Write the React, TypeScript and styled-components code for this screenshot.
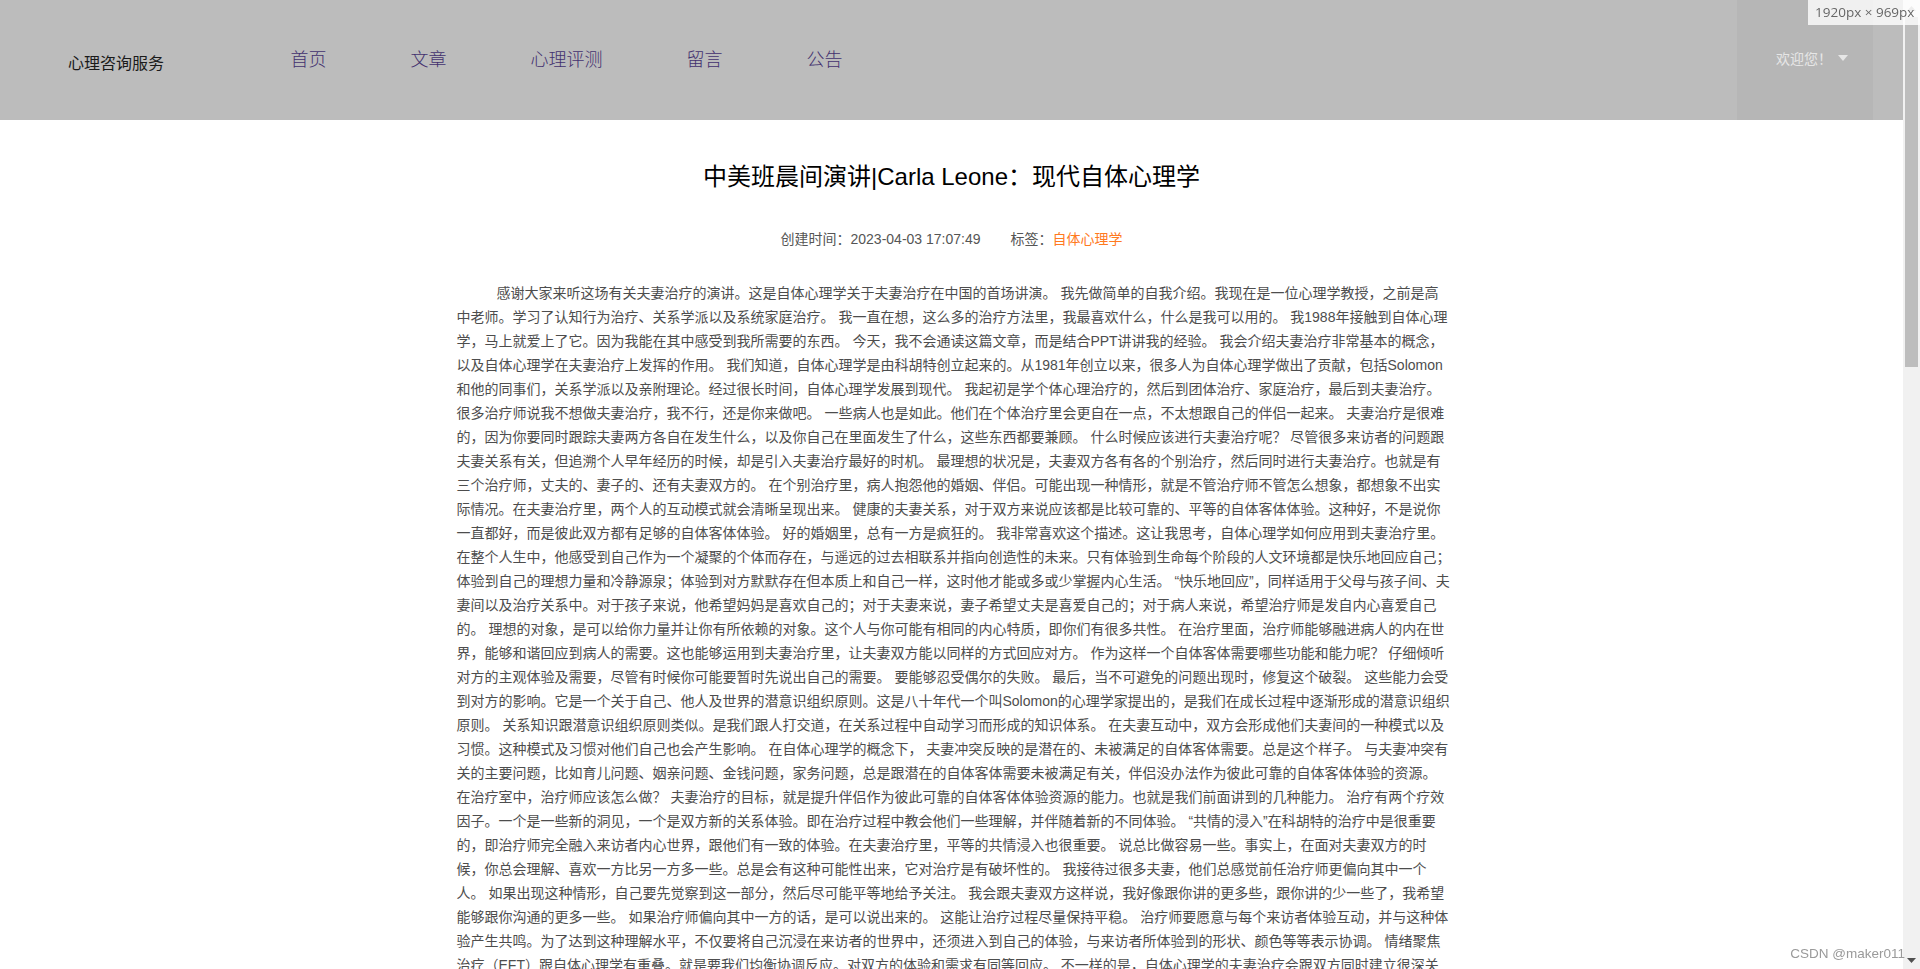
import styled, { createGlobalStyle } from "styled-components";

const GlobalStyle = createGlobalStyle`
    html, body {
        margin: 0;
        padding: 0;
        height: 100%;
        overflow: hidden;
        background: #fff;
    }
    body {
        font-family: "Liberation Sans", "Noto Sans CJK SC", sans-serif;
    }
`

const Page = styled.div`
    display: flex;
    height: 100vh;
    overflow: hidden;
`

const Viewport = styled.div`
    flex: 1;
    min-width: 0;
    overflow: hidden;
`

const Header = styled.header`
    display: flex;
    align-items: stretch;
    height: 120px;
    background: #bcbcbc;
    padding: 0 30px 0 68px;
`

const Logo = styled.div`
    width: 180.6px;
    padding-top: 4px;
    font-size: 16px;
    color: #1a1a1a;
    display: flex;
    align-items: center;
`

const Nav = styled.nav`
    display: flex;
    align-items: center;
    padding-bottom: 4px;
`

const NavLink = styled.a`
    padding: 0 42px;
    font-size: 18px;
    font-weight: 300;
    color: #43316f;
    cursor: pointer;
`

const UserBox = styled.div`
    margin-left: auto;
    width: 136px;
    box-sizing: border-box;
    padding: 0 0 4px 39px;
    display: flex;
    align-items: center;
    gap: 6px;
    background: #b6b6b6;
    color: #e6e6e6;
    font-size: 14px;
`

const Caret = styled.span`
    width: 0;
    height: 0;
    border-left: 5.5px solid transparent;
    border-right: 5.5px solid transparent;
    border-top: 6px solid #e6e6e6;
`

const Title = styled.h1`
    margin: 40px 0 0;
    text-align: center;
    font-size: 24px;
    line-height: 34px;
    font-weight: 400;
    color: #000;
`

const Meta = styled.div`
    margin-top: 35px;
    display: flex;
    justify-content: center;
    gap: 30px;
    font-size: 14px;
    line-height: 20px;
    color: #555;
`

const Tag = styled.span`
    color: #ff7a1f;
`

const Article = styled.article`
    width: 990px;
    margin: 32px auto 0;
    font-size: 14px;
    line-height: 24px;
    color: #4d4d4d;
`

const Line = styled.span`
    display: block;
    white-space: nowrap;
    &:first-child {
        text-indent: 40px;
    }
`

const ScrollRail = styled.div`
    width: 17px;
    flex: none;
    display: flex;
    flex-direction: column;
    align-items: center;
    background: #f1f1f1;
`

const RailButton = styled.div`
    width: 17px;
    height: 17px;
    flex: none;
    display: flex;
    align-items: center;
    justify-content: center;
`

const RailThumb = styled.div`
    width: 13px;
    height: 350px;
    flex: none;
    background: #bdbdbd;
`

const RailGap = styled.div`
    flex: 1;
`

const SizeBadge = styled.div`
    position: fixed;
    top: 0;
    right: 0;
    width: 112px;
    height: 25px;
    box-sizing: border-box;
    padding-left: 7px;
    background: rgba(255, 255, 255, 0.8);
    color: #666;
    font-family: "Open Sans", sans-serif;
    font-size: 13.5px;
    line-height: 25px;
    white-space: nowrap;
`

const Watermark = styled.div`
    position: fixed;
    right: 15px;
    bottom: 7px;
    color: #9a9a9a;
    font-size: 13.5px;
    line-height: 16px;
    white-space: nowrap;
`

const navItems = ["首页", "文章", "心理评测", "留言", "公告"]

const lines = [
    "感谢大家来听这场有关夫妻治疗的演讲。这是自体心理学关于夫妻治疗在中国的首场讲演。 我先做简单的自我介绍。我现在是一位心理学教授，之前是高",
    "中老师。学习了认知行为治疗、关系学派以及系统家庭治疗。 我一直在想，这么多的治疗方法里，我最喜欢什么，什么是我可以用的。 我1988年接触到自体心理",
    "学，马上就爱上了它。因为我能在其中感受到我所需要的东西。 今天，我不会通读这篇文章，而是结合PPT讲讲我的经验。 我会介绍夫妻治疗非常基本的概念，",
    "以及自体心理学在夫妻治疗上发挥的作用。 我们知道，自体心理学是由科胡特创立起来的。从1981年创立以来，很多人为自体心理学做出了贡献，包括Solomon",
    "和他的同事们，关系学派以及亲附理论。经过很长时间，自体心理学发展到现代。 我起初是学个体心理治疗的，然后到团体治疗、家庭治疗，最后到夫妻治疗。",
    "很多治疗师说我不想做夫妻治疗，我不行，还是你来做吧。 一些病人也是如此。他们在个体治疗里会更自在一点，不太想跟自己的伴侣一起来。 夫妻治疗是很难",
    "的，因为你要同时跟踪夫妻两方各自在发生什么，以及你自己在里面发生了什么，这些东西都要兼顾。 什么时候应该进行夫妻治疗呢？ 尽管很多来访者的问题跟",
    "夫妻关系有关，但追溯个人早年经历的时候，却是引入夫妻治疗最好的时机。 最理想的状况是，夫妻双方各有各的个别治疗，然后同时进行夫妻治疗。也就是有",
    "三个治疗师，丈夫的、妻子的、还有夫妻双方的。 在个别治疗里，病人抱怨他的婚姻、伴侣。可能出现一种情形，就是不管治疗师不管怎么想象，都想象不出实",
    "际情况。在夫妻治疗里，两个人的互动模式就会清晰呈现出来。 健康的夫妻关系，对于双方来说应该都是比较可靠的、平等的自体客体体验。这种好，不是说你",
    "一直都好，而是彼此双方都有足够的自体客体体验。 好的婚姻里，总有一方是疯狂的。 我非常喜欢这个描述。这让我思考，自体心理学如何应用到夫妻治疗里。",
    "在整个人生中，他感受到自己作为一个凝聚的个体而存在，与遥远的过去相联系并指向创造性的未来。只有体验到生命每个阶段的人文环境都是快乐地回应自己；",
    "体验到自己的理想力量和冷静源泉；体验到对方默默存在但本质上和自己一样，这时他才能或多或少掌握内心生活。 “快乐地回应”，同样适用于父母与孩子间、夫",
    "妻间以及治疗关系中。对于孩子来说，他希望妈妈是喜欢自己的；对于夫妻来说，妻子希望丈夫是喜爱自己的；对于病人来说，希望治疗师是发自内心喜爱自己",
    "的。 理想的对象，是可以给你力量并让你有所依赖的对象。这个人与你可能有相同的内心特质，即你们有很多共性。 在治疗里面，治疗师能够融进病人的内在世",
    "界，能够和谐回应到病人的需要。这也能够运用到夫妻治疗里，让夫妻双方能以同样的方式回应对方。 作为这样一个自体客体需要哪些功能和能力呢？ 仔细倾听",
    "对方的主观体验及需要，尽管有时候你可能要暂时先说出自己的需要。 要能够忍受偶尔的失败。 最后，当不可避免的问题出现时，修复这个破裂。 这些能力会受",
    "到对方的影响。它是一个关于自己、他人及世界的潜意识组织原则。这是八十年代一个叫Solomon的心理学家提出的，是我们在成长过程中逐渐形成的潜意识组织",
    "原则。 关系知识跟潜意识组织原则类似。是我们跟人打交道，在关系过程中自动学习而形成的知识体系。 在夫妻互动中，双方会形成他们夫妻间的一种模式以及",
    "习惯。这种模式及习惯对他们自己也会产生影响。 在自体心理学的概念下， 夫妻冲突反映的是潜在的、未被满足的自体客体需要。总是这个样子。 与夫妻冲突有",
    "关的主要问题，比如育儿问题、姻亲问题、金钱问题，家务问题，总是跟潜在的自体客体需要未被满足有关，伴侣没办法作为彼此可靠的自体客体体验的资源。",
    "在治疗室中，治疗师应该怎么做？ 夫妻治疗的目标，就是提升伴侣作为彼此可靠的自体客体体验资源的能力。也就是我们前面讲到的几种能力。 治疗有两个疗效",
    "因子。一个是一些新的洞见，一个是双方新的关系体验。即在治疗过程中教会他们一些理解，并伴随着新的不同体验。 “共情的浸入”在科胡特的治疗中是很重要",
    "的，即治疗师完全融入来访者内心世界，跟他们有一致的体验。在夫妻治疗里，平等的共情浸入也很重要。 说总比做容易一些。事实上，在面对夫妻双方的时",
    "候，你总会理解、喜欢一方比另一方多一些。总是会有这种可能性出来，它对治疗是有破坏性的。 我接待过很多夫妻，他们总感觉前任治疗师更偏向其中一个",
    "人。 如果出现这种情形，自己要先觉察到这一部分，然后尽可能平等地给予关注。 我会跟夫妻双方这样说，我好像跟你讲的更多些，跟你讲的少一些了，我希望",
    "能够跟你沟通的更多一些。 如果治疗师偏向其中一方的话，是可以说出来的。 这能让治疗过程尽量保持平稳。 治疗师要愿意与每个来访者体验互动，并与这种体",
    "验产生共鸣。为了达到这种理解水平，不仅要将自己沉浸在来访者的世界中，还须进入到自己的体验，与来访者所体验到的形状、颜色等等表示协调。 情绪聚焦",
    "治疗（EFT）跟自体心理学有重叠。就是要我们均衡协调反应。对双方的体验和需求有同等回应。 不一样的是，自体心理学的夫妻治疗会跟双方同时建立很深关",
]

export default function App() {
    return <>
        <GlobalStyle />
        <Page>
            <Viewport>
                <Header>
                    <Logo>心理咨询服务</Logo>
                    <Nav>
                        {navItems.map((item) => <NavLink key={item}>{item}</NavLink>)}
                    </Nav>
                    <UserBox>
                        <span>欢迎您！</span>
                        <Caret />
                    </UserBox>
                </Header>
                <Title>中美班晨间演讲|Carla Leone：现代自体心理学</Title>
                <Meta>
                    <span>创建时间：2023-04-03 17:07:49</span>
                    <span>标签：<Tag>自体心理学</Tag></span>
                </Meta>
                <Article>
                    {lines.map((line, i) => <Line key={i}>{line}</Line>)}
                </Article>
            </Viewport>
            <ScrollRail>
                <RailButton>
                    <svg width="9" height="5" viewBox="0 0 9 5"><path d="M4.5 0L9 5H0z" fill="#a3a3a3" /></svg>
                </RailButton>
                <RailThumb />
                <RailGap />
                <RailButton>
                    <svg width="9" height="5" viewBox="0 0 9 5"><path d="M0 0H9L4.5 5z" fill="#505050" /></svg>
                </RailButton>
            </ScrollRail>
        </Page>
        <SizeBadge>1920px × 969px</SizeBadge>
        <Watermark>CSDN @maker011</Watermark>
    </>
}
